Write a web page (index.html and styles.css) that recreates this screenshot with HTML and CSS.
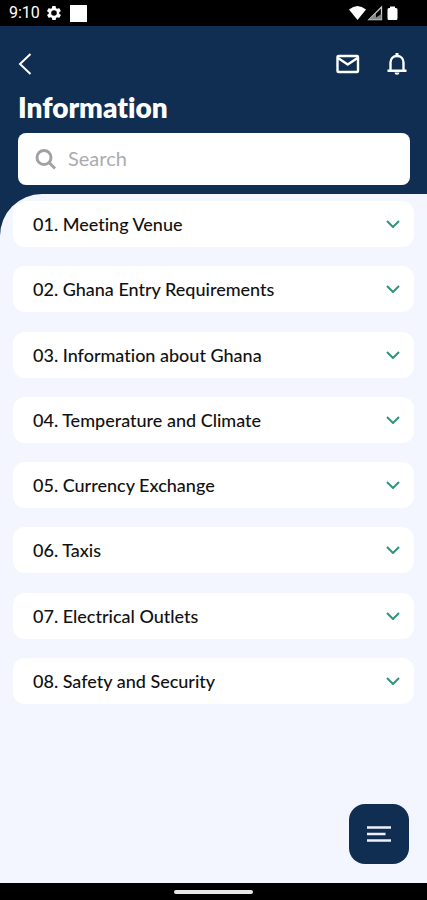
FILE: index.html
```html
<!DOCTYPE html>
<html lang="en">
<head>
<meta charset="utf-8">
<meta name="viewport" content="width=device-width, initial-scale=1">
<title>Information</title>
<link rel="stylesheet" href="styles.css">
</head>
<body>
<div class="app">
  <div class="status">
    <span class="clock">9:10</span>
    <svg class="gear" width="14" height="14" viewBox="2 2 20 20" fill="#fff"><path fill-rule="evenodd" d="M19.4 13a7.5 7.5 0 0 0 0-2l2.1-1.600a.5.5 0 0 0 .1-.7l-2-3.400a.5.5 0 0 0-.6-.2l-2.500 1a7.300 7.300 0 0 0-1.700-1l-.4-2.600a.5.5 0 0 0-.5-.5h-4a.5.5 0 0 0-.5.500l-.4 2.600a7.600 7.600 0 0 0-1.700 1l-2.500-1a.5.5 0 0 0-.6.200l-2 3.400a.5.5 0 0 0 .1.700L4.500 11a7.500 7.500 0 0 0 0 2l-2.100 1.600a.5.5 0 0 0-.1.700l2 3.400a.5.5 0 0 0 .6.200l2.500-1a7.300 7.300 0 0 0 1.700 1l.4 2.600a.5.5 0 0 0 .5.500h4a.5.5 0 0 0 .5-.5l.4-2.600a7.600 7.600 0 0 0 1.700-1l2.500 1a.5.5 0 0 0 .6-.2l2-3.400a.5.5 0 0 0-.1-.7zM12 8a4 4 0 1 1 0 8 4 4 0 0 1 0-8z"/></svg>
    <span class="square"></span>
    <svg class="signals" width="50" height="16" viewBox="0 0 50 16" fill="#fff"><path d="M0 4.500Q8.500-2.500 17 4.500L8.500 15z"/><path d="M32.500 2v12.500H20z" fill="none" stroke="#ccc" stroke-width="1.300"/><path d="M32.500 9v5.500H20l7-6v4z" fill="#888"/><path d="M41 1.500h5V3h1q1.500 0 1.500 1.500v9q0 1.500-1.500 1.500h-7q-1.500 0-1.500-1.500v-9Q38.500 3 40 3h1z"/></svg>
  </div>
  <header class="header">
    <nav class="toolbar">
      <button class="icon-btn back" aria-label="Back"><svg width="16" height="24" viewBox="0 0 16 24" fill="none" stroke="#fff" stroke-width="2"><path d="M12.500 2L2 12l10.500 10"/></svg></button>
      <button class="icon-btn" aria-label="Messages"><svg width="24" height="20" viewBox="0 0 24 20" fill="none" stroke="#fff" stroke-width="2.400" stroke-linejoin="round"><rect x="1.500" y="2" width="20.500" height="16" rx="1"/><path d="M2 4l9.700 6.500L21.500 4"/></svg></button>
      <button class="icon-btn" aria-label="Notifications"><svg width="22" height="24" viewBox="0 0 22 24" fill="none" stroke="#fff" stroke-width="2.400"><path d="M1.500 18.800h19M4.500 18.500v-8C4.500 6.500 7.200 4 11 4s6.500 2.500 6.500 6.500v8"/><path d="M11 1V4" stroke-width="3"/><path d="M8.500 20.500h5a2.500 2.200 0 0 1-5 0z" fill="#fff" stroke="none"/></svg></button>
    </nav>
    <h1 class="title">Information</h1>
    <label class="search">
      <svg width="22" height="22" viewBox="0 0 22 22" fill="none" stroke="#a0a3a6" stroke-width="3"><circle cx="9" cy="9.500" r="7"/><path d="M14 14.500l6 6"/></svg>
      <input type="search" placeholder="Search" aria-label="Search">
    </label>
  </header>
  <main class="content">
    <div class="topics">
      <button class="topic">01. Meeting Venue<svg class="chevron" viewBox="0 0 14 8"><path d="M1 1l6 6 6-6"/></svg></button>
      <button class="topic">02. Ghana Entry Requirements<svg class="chevron" viewBox="0 0 14 8"><path d="M1 1l6 6 6-6"/></svg></button>
      <button class="topic">03. Information about Ghana<svg class="chevron" viewBox="0 0 14 8"><path d="M1 1l6 6 6-6"/></svg></button>
      <button class="topic">04. Temperature and Climate<svg class="chevron" viewBox="0 0 14 8"><path d="M1 1l6 6 6-6"/></svg></button>
      <button class="topic">05. Currency Exchange<svg class="chevron" viewBox="0 0 14 8"><path d="M1 1l6 6 6-6"/></svg></button>
      <button class="topic">06. Taxis<svg class="chevron" viewBox="0 0 14 8"><path d="M1 1l6 6 6-6"/></svg></button>
      <button class="topic">07. Electrical Outlets<svg class="chevron" viewBox="0 0 14 8"><path d="M1 1l6 6 6-6"/></svg></button>
      <button class="topic">08. Safety and Security<svg class="chevron" viewBox="0 0 14 8"><path d="M1 1l6 6 6-6"/></svg></button>
    </div>
    <button class="menu" aria-label="Menu"><svg width="24" height="18" viewBox="0 0 24 18" stroke="#f0f0fa" stroke-width="2.600"><path d="M0 2.500h24M0 9h18.500M0 15.500h24"/></svg></button>
  </main>
  <div class="navbar"><span class="handle"></span></div>
</div>
</body>
</html>
```
FILE: styles.css
```css
* { box-sizing: border-box; }
body { margin: 0; font-family: Lato, "Liberation Sans", sans-serif; font-variant-ligatures: none; }
button { border: 0; padding: 0; background: none; font: inherit; font-variant-ligatures: none; color: inherit; cursor: pointer; }
svg { display: block; flex: none; }

.app { display: flex; flex-direction: column; min-height: 100vh; background: #102e52; }

.status {
  display: flex;
  align-items: center;
  height: 26px;
  padding: 0 28px 0 9px;
  background: #000;
  color: #fff;
}
.clock { font: 16px/26px Roboto, sans-serif; }
.gear { margin-left: 7px; }
.square { width: 17px; height: 17px; margin-left: 9px; background: #fff; }
.signals { margin-left: auto; }

.header { padding: 20px 17px 9px 18px; color: #fff; }
.toolbar { display: flex; align-items: center; gap: 26px; height: 36px; padding-right: 2px; }
.back { margin-right: auto; }
.title { margin: 8px 0; font-size: 28px; line-height: 35px; font-weight: 800; }
.search {
  display: flex;
  align-items: center;
  gap: 11px;
  height: 52px;
  padding: 0 17px;
  border-radius: 8px;
  background: #fff;
}
.search input {
  flex: 1;
  min-width: 0;
  border: 0;
  padding: 0 0 2px;
  outline: 0;
  background: none;
  font: 20px/24px Lato, sans-serif;
  color: #111;
}
.search input::placeholder { color: #aaacaf; opacity: 1; }

.content {
  display: flex;
  flex: 1;
  flex-direction: column;
  justify-content: space-between;
  padding: 7px 13px 19px;
  border-top-left-radius: 42px;
  background: #f3f6ff;
}
.topics { display: grid; align-content: space-between; min-height: 503px; }
.topic {
  display: flex;
  align-items: center;
  justify-content: space-between;
  height: 46px;
  padding: 0 14px 0 20px;
  border-radius: 12px;
  background: #fff;
  color: #111;
  font-size: 18px;
  line-height: 24px;
  font-weight: 500;
  text-align: left;
}
.chevron { width: 14px; height: 8px; fill: none; stroke: #2d947e; stroke-width: 2; }
.menu {
  display: grid;
  place-items: center;
  align-self: flex-end;
  width: 60px;
  height: 60px;
  margin-right: 5px;
  border-radius: 16px;
  background: #102e52;
}

.navbar { display: grid; place-items: center; height: 17px; background: #000; }
.handle { width: 79px; height: 4px; border-radius: 2px; background: #e8e8e8; }
```
